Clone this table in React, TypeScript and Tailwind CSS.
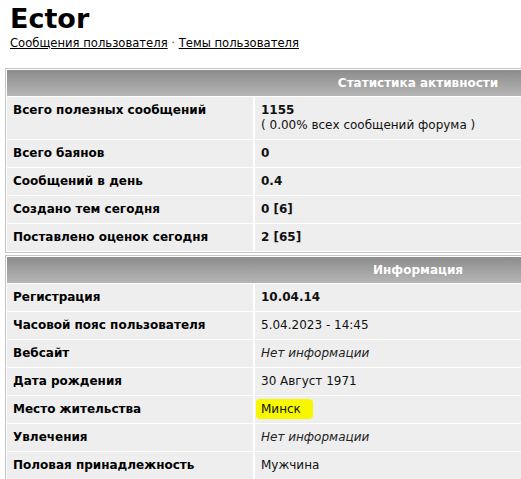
const font = { fontFamily: '"DejaVu Sans", Verdana, sans-serif' };

type Row = { label: string; value: React.ReactNode };

function Header({ title }: { title: string }) {
  return (
    <div className="col-span-2 grid h-[26px] grid-cols-[246px_328px] gap-px bg-gradient-to-b from-[#8c8c8c] to-[#b6b6b6]">
      <div />
      <div className="flex items-center justify-center text-[12px] font-bold text-white">
        {title}
      </div>
    </div>
  );
}

function Table({ title, rows }: { title: string; rows: Row[] }) {
  return (
    <div className="ml-[5px] w-[580px] border border-[#c4c4c4] bg-white p-px">
      <div className="grid grid-cols-[246px_328px] gap-x-[2px] gap-y-px">
        <Header title={title} />
        {rows.map((r) => (
          <div key={r.label} className="contents">
            <div className="bg-[#eeeeee] p-[6px] text-[12px] font-bold leading-[15px] text-black">
              {r.label}
            </div>
            <div className="bg-[#eeeeee] p-[6px] text-[12px] leading-[15px] text-[#111]">
              {r.value}
            </div>
          </div>
        ))}
      </div>
    </div>
  );
}

const noInfo = <i className="text-[#222]">Нет информации</i>;

const stats: Row[] = [
  {
    label: "Всего полезных сообщений",
    value: (
      <>
        <b>1155</b>
        <br />( 0.00% всех сообщений форума )
      </>
    ),
  },
  { label: "Всего баянов", value: <b>0</b> },
  { label: "Сообщений в день", value: <b>0.4</b> },
  { label: "Создано тем сегодня", value: <b>0 [6]</b> },
  { label: "Поставлено оценок сегодня", value: <b>2 [65]</b> },
];

const info: Row[] = [
  { label: "Регистрация", value: <b>10.04.14</b> },
  { label: "Часовой пояс пользователя", value: "5.04.2023 - 14:45" },
  { label: "Вебсайт", value: noInfo },
  { label: "Дата рождения", value: "30 Август 1971" },
  {
    label: "Место жительства",
    value: (
      <span className="-my-[2px] -ml-[5px] rounded-[4px] bg-[#f7f700] py-[3px] pl-[5px] pr-[12px]">
        Минск
      </span>
    ),
  },
  { label: "Увлечения", value: noInfo },
  { label: "Половая принадлежность", value: "Мужчина" },
];

export default function App() {
  return (
    <div className="h-[479px] w-[521px] overflow-hidden bg-white text-black" style={font}>
      <h1 className="ml-[10px] pt-[3px] text-[27px] font-bold leading-[32px]">Ector</h1>
      <div className="ml-[10px] mt-[1px] text-[11.6px] leading-[15px]">
        <a href="#" className="underline">Сообщения пользователя</a>
        <span className="text-[#555]"> · </span>
        <a href="#" className="underline">Темы пользователя</a>
      </div>
      <div className="mt-[17px] flex flex-col gap-[2px]">
        <Table title="Статистика активности" rows={stats} />
        <Table title="Информация" rows={info} />
      </div>
    </div>
  );
}
